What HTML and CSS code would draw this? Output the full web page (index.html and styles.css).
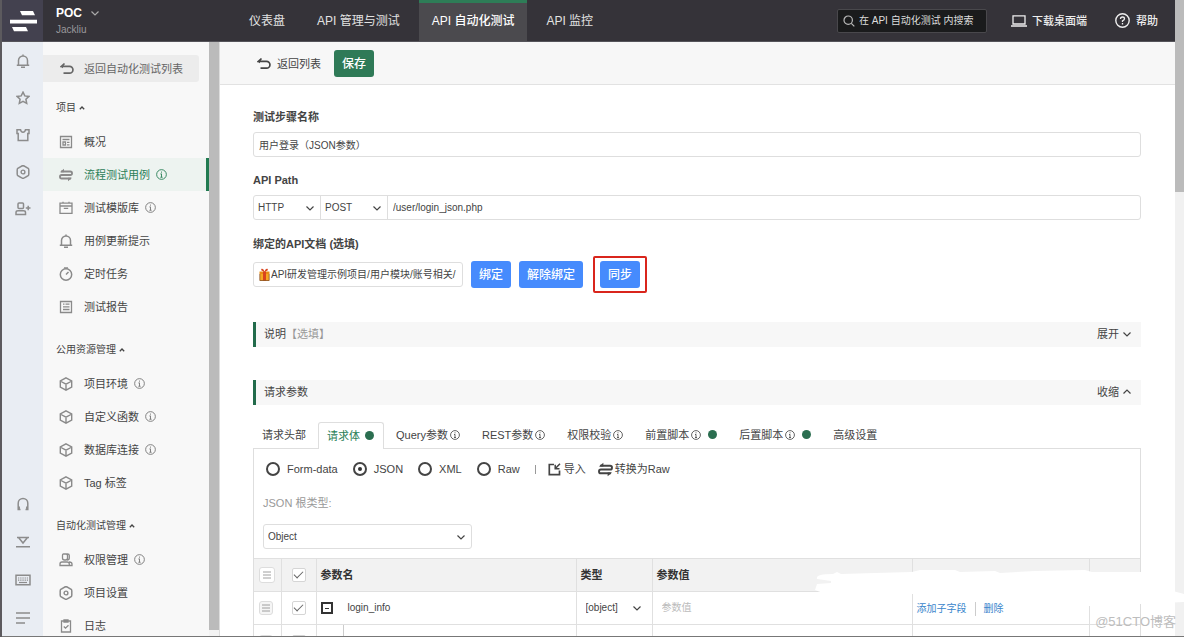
FILE: index.html
```html
<!DOCTYPE html>
<html lang="zh-CN">
<head>
<meta charset="utf-8">
<title>API 自动化测试</title>
<link rel="stylesheet" href="styles.css">
</head>
<body>
<svg class="sprite" aria-hidden="true">
  <symbol id="info" viewBox="0 0 12 12"><circle cx="6" cy="6" r="5.3" fill="none" stroke="currentColor"/><path d="M6 5.2V9M4.8 5.4H6M4.8 9H7.2M6 2.8V4" fill="none" stroke="currentColor"/></symbol>
  <symbol id="down" viewBox="0 0 10 10"><path d="M1.5 3.5 5 7 8.500 3.500" fill="none" stroke="currentColor" stroke-width="1.2"/></symbol>
  <symbol id="up" viewBox="0 0 10 10"><path d="M1.500 6.500 5 3 8.500 6.500" fill="none" stroke="currentColor" stroke-width="1.200"/></symbol>
  <symbol id="caret" viewBox="0 0 6 6"><path d="M.8 4.300 3 2 5.200 4.300" fill="none" stroke="currentColor" stroke-width="1.300"/></symbol>
  <symbol id="back" viewBox="0 0 14 14"><path d="M4.500 1.500 1.500 4.300H9.500a3.300 3.300 0 0 1 0 6.900H3.500M1.500 4.300 3 5.500" fill="none" stroke="currentColor" stroke-width="1.700"/></symbol>
  <symbol id="bell" viewBox="0 0 14 14"><path d="M2.500 11V6.500a4.500 4.500 0 0 1 9 0V11M.8 11.200H13.200M5 13.200H9M7 .5V2" fill="none" stroke="currentColor" stroke-width="1.500"/></symbol>
  <symbol id="star" viewBox="0 0 14 14"><path d="m7 1.200 1.800 3.700 4.100.5-3 2.800.8 4.200L7 10.300l-3.700 2.100.8-4.200-3-2.800 4.100-.5Z" fill="none" stroke="currentColor" stroke-width="1.500"/></symbol>
  <symbol id="shirt" viewBox="0 0 14 14"><path d="M1 1.700H4.500C5 5 9 5 9.500 1.700H13V5.500H11.800V12.500H2.200V5.500H1Z" fill="none" stroke="currentColor" stroke-width="1.500"/></symbol>
  <symbol id="gear" viewBox="0 0 14 14"><path d="M5.200 1.500Q7-.2 8.800 1.500L11.500 3Q13 3.200 12.800 5.500V8.500Q13 10.800 11.500 11L8.800 12.500Q7 14.200 5.200 12.500L2.500 11Q1 10.800 1.200 8.500V5.500Q1 3.200 2.500 3Z" fill="none" stroke="currentColor" stroke-width="1.500"/><circle cx="7" cy="7" r="1.900" fill="none" stroke="currentColor" stroke-width="1.400"/></symbol>
  <symbol id="adduser" viewBox="0 0 16 14"><path d="M4 1H7.500Q8.500 1 8.500 2V5.500Q8.500 6.500 7.500 6.500H4Q3 6.500 3 5.500V2Q3 1 4 1ZM1 12.500V10.500Q1 8.800 3 8.800H8.500Q10.500 8.800 10.500 10.500V12.500ZM10.800 6H15.500M13.200 3.700V8.300" fill="none" stroke="currentColor" stroke-width="1.500"/></symbol>
  <symbol id="headset" viewBox="0 0 14 14"><path d="M4.500 12.500H2.200V6.200a4.800 4.800 0 0 1 9.600 0V12.500H9.500M3.200 9.500V12.500M10.800 9.500V12.500" fill="none" stroke="currentColor" stroke-width="1.500"/></symbol>
  <symbol id="download" viewBox="0 0 14 14"><path d="M1 2.500H13M2.500 2.500 7 8 11.500 2.500M0 11.700H14" fill="none" stroke="currentColor" stroke-width="1.500"/></symbol>
  <symbol id="keyboard" viewBox="0 0 16 14"><path d="M1 2.200H15V11.800H1Z" fill="none" stroke="currentColor" stroke-width="1.500"/><path d="M3 5H13M3 7.200H13" fill="none" stroke="currentColor" stroke-width="1.200" stroke-dasharray="1.300 .9"/><path d="M4 9.500H12" stroke="currentColor" stroke-width="1.200"/></symbol>
  <symbol id="lines" viewBox="0 0 14 14"><path d="M0 2H14M0 7H14M0 12H9" fill="none" stroke="currentColor" stroke-width="1.500"/></symbol>
  <symbol id="overview" viewBox="0 0 14 14"><path d="M1.500 1.500H12.500V12.500H1.500ZM3.500 4.500H10.500M4 7H6.500V10H4ZM8 7.300H10.500M8 9.800H10.500" fill="none" stroke="currentColor" stroke-width="1.300"/></symbol>
  <symbol id="flow" viewBox="0 0 14 14"><path d="M2 3.500H11.300a1.700 1.700 0 0 1 0 3.500H2.700a1.700 1.700 0 0 0 0 3.500H12" fill="none" stroke="currentColor" stroke-width="1.800"/><path d="M.8 4.200 5 .8V4.200ZM13.200 9.800 9 13.200V9.800Z" fill="currentColor"/></symbol>
  <symbol id="box" viewBox="0 0 14 14"><path d="M1 2.200H13V12.300H1ZM1 5H13M4.800 7.300H9.200M4 .8V2.500M10 .8V2.500" fill="none" stroke="currentColor" stroke-width="1.300"/></symbol>
  <symbol id="timer" viewBox="0 0 14 14"><circle cx="7" cy="7.500" r="5.700" fill="none" stroke="currentColor" stroke-width="1.500"/><path d="M7 7.500 9.500 5M5 1H9" fill="none" stroke="currentColor" stroke-width="1.500"/></symbol>
  <symbol id="report" viewBox="0 0 14 14"><path d="M1.500 1.500H12.500V12.500H1.500ZM4 4.200H5.500M6.500 4.200H10.500M4 6.800H10.500M4 9.500H10.500" fill="none" stroke="currentColor" stroke-width="1.300"/></symbol>
  <symbol id="cube" viewBox="0 0 14 14"><path d="M7 .8 12.700 4V10L7 13.200 1.300 10V4ZM2 4.500 7 7.200 12 4.500M7 7.200V13" fill="none" stroke="currentColor" stroke-width="1.400"/></symbol>
  <symbol id="users" viewBox="0 0 14 14"><path d="M4.500 1H7Q8.500 1 8.500 2.500V5Q8.500 7 6.500 7H5.500Q3.500 7 3.500 5V2.500Q3.500 1 4.500 1ZM7.500 1H8.500Q10.300 1 10.300 2.500V5Q10.300 7 8 7M1 12.500V11Q1 9 3 9H8Q10.300 9 10.300 11V12.500ZM10 9Q13 9 13 11V12.500H10.500" fill="none" stroke="currentColor" stroke-width="1.300"/></symbol>
  <symbol id="log" viewBox="0 0 14 14"><path d="M2.500 2H11.500V13H2.500ZM5 .8H9V3H5ZM4.800 7.500 6.500 9.200 9.500 6.200" fill="none" stroke="currentColor" stroke-width="1.300"/></symbol>
</svg>

<div class="app">
  <header class="topbar">
    <a class="logo" href="#" aria-label="首页"><svg width="28" height="24" viewBox="0 0 28 24"><path d="M11 2H24L26 6.300H13ZM1 10.800H28V14.500H1ZM3 18H17L19 22.300H5Z" fill="#fff"/></svg></a>
    <div class="account">
      <button class="workspace" type="button">POC <svg width="10" height="10"><use href="#down"/></svg></button>
      <span class="user">Jackliu</span>
    </div>
    <nav class="nav">
      <a href="#">仪表盘</a>
      <a href="#">API 管理与测试</a>
      <a class="active" href="#">API 自动化测试</a>
      <a href="#">API 监控</a>
    </nav>
    <div class="tools">
      <label class="search"><svg width="12" height="12" viewBox="0 0 12 12"><circle cx="5.200" cy="5.200" r="4.200" fill="none" stroke="currentColor" stroke-width="1.200"/><path d="m8.300 8.300 3 3" stroke="currentColor" stroke-width="1.200"/></svg><input type="text" placeholder="在 API 自动化测试 内搜索" aria-label="搜索"></label>
      <a class="desktop" href="#"><svg width="16" height="12" viewBox="0 0 16 12"><path d="M2 .8H14V9H2ZM0 11H16" fill="none" stroke="currentColor" stroke-width="1.300"/></svg>下载桌面端</a>
      <a class="help" href="#"><svg width="15" height="15" viewBox="0 0 15 15"><circle cx="7.500" cy="7.500" r="6.700" fill="none" stroke="currentColor" stroke-width="1.400"/><path d="M5.500 6Q5.500 4 7.500 4T9.500 5.800Q9.500 7 7.500 7.800V9M7.500 10V11.500" fill="none" stroke="currentColor" stroke-width="1.300"/></svg>帮助</a>
    </div>
  </header>

  <div class="body">
    <div class="rail">
      <div class="rail-group">
        <button type="button" aria-label="通知"><svg width="14" height="14"><use href="#bell"/></svg></button>
        <button type="button" aria-label="收藏"><svg width="14" height="14"><use href="#star"/></svg></button>
        <button type="button" aria-label="主题"><svg width="14" height="14"><use href="#shirt"/></svg></button>
        <button type="button" aria-label="设置"><svg width="14" height="14"><use href="#gear"/></svg></button>
        <button type="button" aria-label="邀请成员"><svg width="16" height="14"><use href="#adduser"/></svg></button>
      </div>
      <div class="rail-group lower">
        <button type="button" aria-label="客服"><svg width="14" height="14"><use href="#headset"/></svg></button>
        <button type="button" aria-label="下载"><svg width="14" height="14"><use href="#download"/></svg></button>
        <button type="button" aria-label="快捷键"><svg width="16" height="14"><use href="#keyboard"/></svg></button>
        <button type="button" aria-label="菜单"><svg width="14" height="14"><use href="#lines"/></svg></button>
      </div>
    </div>

    <aside class="sidebar">
      <a class="side-back" href="#"><svg width="14" height="14"><use href="#back"/></svg>返回自动化测试列表</a>
      <section class="side-section">
        <h2>项目<svg width="6" height="6"><use href="#caret"/></svg></h2>
        <a href="#"><svg width="14" height="14"><use href="#overview"/></svg>概况</a>
        <a class="active" href="#"><svg width="14" height="14"><use href="#flow"/></svg>流程测试用例<svg class="info" width="11" height="11"><use href="#info"/></svg></a>
        <a href="#"><svg width="14" height="14"><use href="#box"/></svg>测试模版库<svg class="info" width="11" height="11"><use href="#info"/></svg></a>
        <a href="#"><svg width="14" height="14"><use href="#bell"/></svg>用例更新提示</a>
        <a href="#"><svg width="14" height="14"><use href="#timer"/></svg>定时任务</a>
        <a href="#"><svg width="14" height="14"><use href="#report"/></svg>测试报告</a>
      </section>
      <section class="side-section">
        <h2>公用资源管理<svg width="6" height="6"><use href="#caret"/></svg></h2>
        <a href="#"><svg width="14" height="14"><use href="#cube"/></svg>项目环境<svg class="info" width="11" height="11"><use href="#info"/></svg></a>
        <a href="#"><svg width="14" height="14"><use href="#cube"/></svg>自定义函数<svg class="info" width="11" height="11"><use href="#info"/></svg></a>
        <a href="#"><svg width="14" height="14"><use href="#cube"/></svg>数据库连接<svg class="info" width="11" height="11"><use href="#info"/></svg></a>
        <a href="#"><svg width="14" height="14"><use href="#cube"/></svg>Tag 标签</a>
      </section>
      <section class="side-section">
        <h2>自动化测试管理<svg width="6" height="6"><use href="#caret"/></svg></h2>
        <a href="#"><svg width="14" height="14"><use href="#users"/></svg>权限管理<svg class="info" width="11" height="11"><use href="#info"/></svg></a>
        <a href="#"><svg width="14" height="14"><use href="#gear"/></svg>项目设置</a>
        <a href="#"><svg width="14" height="14"><use href="#log"/></svg>日志</a>
      </section>
    </aside>
    <div class="side-scroll"><div class="side-thumb"></div></div>

    <main class="main">
      <div class="toolbar">
        <a class="return" href="#"><svg width="14" height="14"><use href="#back"/></svg>返回列表</a>
        <button class="btn save" type="button">保存</button>
      </div>
      <form class="content">
        <label class="label" for="name">测试步骤名称</label>
        <input class="field" id="name" type="text" value="用户登录（JSON参数）">

        <label class="label" for="path">API Path</label>
        <div class="path field">
          <span class="select"><select aria-label="协议"><option>HTTP</option></select><svg width="10" height="10"><use href="#down"/></svg></span>
          <span class="select"><select aria-label="请求方式"><option>POST</option></select><svg width="10" height="10"><use href="#down"/></svg></span>
          <input id="path" type="text" value="/user/login_json.php">
        </div>

        <label class="label" for="doc">绑定的API文档 (选填)</label>
        <div class="bind">
          <div class="doc field">
            <svg width="11" height="13" viewBox="0 0 11 13"><path d="M1 4H10V12.500H1Z" fill="#f5a623"/><path d="M.5 3.500H10.500V6H.5Z" fill="#e88c14"/><path d="M4 3.500H7V12.500H4ZM5.500 3.500Q1 3 2.500.8 4.500 0 5.500 3.500 6.500 0 8.500.8 10 3 5.500 3.500Z" fill="#d9431e"/><path d="M.8 6V12.500H10.200V6" fill="none" stroke="#8a4b14" stroke-width=".8"/></svg>
            <input id="doc" type="text" value="API研发管理示例项目/用户模块/账号相关/">
          </div>
          <button class="btn blue" type="button">绑定</button>
          <button class="btn blue" type="button">解除绑定</button>
          <span class="marked"><button class="btn blue" type="button">同步</button></span>
        </div>

        <div class="bar first"><h3>说明<span>【选填】</span></h3><button type="button">展开<svg width="10" height="10"><use href="#down"/></svg></button></div>
        <div class="bar"><h3>请求参数</h3><button type="button">收缩<svg width="10" height="10"><use href="#up"/></svg></button></div>

        <div class="tabs">
          <button type="button">请求头部</button>
          <button class="active" type="button">请求体<i class="dot"></i></button>
          <button type="button">Query参数<svg width="10" height="10"><use href="#info"/></svg></button>
          <button type="button">REST参数<svg width="10" height="10"><use href="#info"/></svg></button>
          <button type="button">权限校验<svg width="10" height="10"><use href="#info"/></svg></button>
          <button type="button">前置脚本<svg width="10" height="10"><use href="#info"/></svg><i class="dot"></i></button>
          <button type="button">后置脚本<svg width="10" height="10"><use href="#info"/></svg><i class="dot"></i></button>
          <button type="button">高级设置</button>
        </div>

        <div class="panel">
          <div class="formats">
            <label><input type="radio" name="format">Form-data</label>
            <label><input type="radio" name="format" checked>JSON</label>
            <label><input type="radio" name="format">XML</label>
            <label><input type="radio" name="format">Raw</label>
            <span class="sep"></span>
            <button type="button"><svg width="13" height="13" viewBox="0 0 13 13"><path d="M6 1.500H1.300V11.700H11.500V7.500" fill="none" stroke="currentColor" stroke-width="1.700"/><path d="M12 .8 7.800 5M7.200 1.800V5.700H11.500" fill="none" stroke="currentColor" stroke-width="1.500"/></svg>导入</button>
            <button class="convert" type="button"><svg width="15" height="15"><use href="#flow"/></svg>转换为Raw</button>
          </div>
          <label class="root-label" for="root">JSON 根类型:</label>
          <span class="select field root"><select id="root"><option>Object</option></select><svg width="10" height="10"><use href="#down"/></svg></span>

          <table>
            <colgroup><col class="c-handle"><col class="c-check"><col class="c-name"><col class="c-type"><col class="c-value"><col class="c-actions"><col class="c-end"></colgroup>
            <thead>
              <tr>
                <th><button class="handle" type="button" aria-label="排序"><svg width="8" height="8" viewBox="0 0 8 8"><path d="M0 1H8M0 4H8M0 7H8" stroke="currentColor" stroke-width=".8"/></svg></button></th>
                <th class="mid"><input type="checkbox" checked aria-label="全选"></th>
                <th>参数名</th><th>类型</th><th>参数值</th><th></th><th></th>
              </tr>
            </thead>
            <tbody>
              <tr>
                <td><button class="handle soft" type="button" aria-label="排序"><svg width="8" height="8" viewBox="0 0 8 8"><path d="M0 1H8M0 4H8M0 7H8" stroke="currentColor" stroke-width=".8"/></svg></button></td>
                <td class="mid"><input type="checkbox" checked aria-label="选择 login_info"></td>
                <td><div class="name"><button class="collapse" type="button" aria-label="收起"></button><span>login_info</span></div></td>
                <td class="type"><span class="select"><select aria-label="类型"><option>[object]</option></select><svg width="10" height="10"><use href="#down"/></svg></span></td>
                <td><input class="value" type="text" placeholder="参数值" aria-label="参数值"></td>
                <td><div class="actions"><a href="#">添加子字段</a><a href="#">删除</a></div></td>
                <td></td>
              </tr>
              <tr>
                <td><button class="handle soft" type="button" aria-label="排序"><svg width="8" height="8" viewBox="0 0 8 8"><path d="M0 1H8M0 4H8M0 7H8" stroke="currentColor" stroke-width=".8"/></svg></button></td>
                <td class="mid"><input type="checkbox" aria-label="选择子字段"></td>
                <td><div class="branch"></div></td>
                <td></td><td></td><td></td><td></td>
              </tr>
            </tbody>
          </table>
        </div>
      </form>
    </main>
  </div>
</div>
<div class="page-scroll"><div class="page-thumb"></div></div>
<svg class="erased" width="369" height="40" viewBox="0 0 369 40"><path d="M2 10Q0 5 18 5L22 3 26 5 60 4 97 3 105 1 140 1 145 3 180 2 185 4 220 2 270 1 277 3 330 3 346 5 347 21 358 22 369 25V33L326 35 274 37 200 37 190 30 97 25 8 24 0 21 2 15 16 14V12Z" fill="#fff"/></svg>
<span class="watermark">@51CTO博客</span>
</body>
</html>
```
FILE: styles.css
```css
* { box-sizing: border-box; }

body {
  position: relative;
  display: flex;
  height: 100vh;
  margin: 0;
  overflow: hidden;
  border-left: 2px solid #5c5a5e;
  background: #fff;
  color: #444;
  font: 11px/14px "Liberation Sans", "Noto Sans CJK SC", sans-serif;
}

body::after {
  content: "";
  position: absolute;
  inset: auto 0 0 -2px;
  height: 1px;
  background: #777;
}

a { color: inherit; text-decoration: none; }
button, input, select { margin: 0; padding: 0; border: 0; background: none; color: inherit; font: inherit; }
input, select { min-width: 0; outline: 0; }
svg { flex: none; }
h2, h3 { margin: 0; font: inherit; }
.sprite { position: absolute; width: 0; height: 0; }

.app { display: flex; flex: 1; flex-direction: column; min-width: 0; }

/* top bar */
.topbar { display: flex; flex: none; height: 42px; border-bottom: 1px solid #55545a; background: #353339; color: #e2e2e2; }
.logo { display: grid; place-items: center; width: 41px; background: #43414f; }
.account { display: flex; flex-direction: column; justify-content: center; gap: 3px; width: 176px; padding: 2px 0 0 13px; font-size: 10px; }
.workspace { display: flex; align-items: center; gap: 8px; color: #fff; font-size: 12px; font-weight: bold; }
.workspace svg { color: #aaa; }
.user { color: #99989c; }
.nav { display: flex; gap: 6px; margin-left: 17px; font-size: 12px; }
.nav a { display: flex; align-items: center; padding: 0 13px; border-top: 3px solid transparent; border-bottom: 3px solid transparent; white-space: nowrap; }
.nav .active { border-top-color: #2e7d57; border-bottom-color: #4b4a4e; background: #4b4a4e; color: #fff; font-weight: 500; }
.tools { display: flex; align-items: center; margin-left: auto; padding-right: 17px; white-space: nowrap; }
.search { display: flex; align-items: center; gap: 4px; width: 150px; height: 24px; padding: 0 5px; border: 1px solid #49484c; border-radius: 2px; background: #1a1b1c; color: #bbb; font-size: 10px; }
.search input { flex: 1; }
.search input::placeholder { color: #ddd; opacity: 1; }
.desktop, .help { display: flex; align-items: center; color: #eee; font-weight: 500; }
.desktop { gap: 5px; margin-left: 24px; }
.help { gap: 6px; margin-left: 28px; }

.body { display: flex; flex: 1; min-height: 0; }

/* icon rail */
.rail { display: flex; flex: none; flex-direction: column; justify-content: space-between; width: 41px; padding-bottom: 1px; background: #e9edf3; color: #8c8c8c; }
.rail-group { display: flex; flex-direction: column; }
.lower { gap: 1px; }
.rail button { display: grid; place-items: center; height: 37px; }

/* sidebar */
.sidebar { flex: none; width: 166px; padding-top: 13px; overflow: hidden; background: #f8f8f8; }
.side-back { display: flex; align-items: center; gap: 10px; height: 27px; margin: 0 10px 10px 0; padding-left: 17px; border-radius: 0 3px 3px 0; background: #ececec; color: #666; }
.side-section { margin-bottom: 11px; }
.side-section h2 { display: flex; align-items: center; gap: 3px; height: 31px; margin-bottom: 2px; padding-left: 13px; font-size: 10px; }
.side-section a { display: flex; align-items: center; height: 33px; padding-left: 16px; border-right: 3px solid transparent; }
.side-section a > svg:first-child { margin-right: 11px; color: #8a8a8a; }
.side-section .active { border-right-color: #207a50; background: #edf3f0; color: #2b8058; }
.info { margin-left: 6px; color: #777; }
.active .info { color: #2b8058; }
.side-scroll { flex: none; width: 11px; padding-bottom: 7px; border-right: 1px solid #ddd; background: #f3f3f3; }
.side-thumb { height: 100%; background: #bbb; }

/* main column */
.main { flex: 1; min-width: 0; overflow: hidden; }
.toolbar { display: flex; align-items: center; gap: 13px; height: 43px; padding: 1px 0 0 37px; border-bottom: 1px solid #e2e2e2; background: #f7f7f7; }
.return { display: flex; align-items: center; gap: 6px; }
.btn { height: 27px; padding: 0 8px; border-radius: 3px; color: #fff; font-size: 12px; font-weight: 500; white-space: nowrap; }
.save { background: #2f7a57; }
.blue { background: #468bfd; }

.content { display: flex; flex-direction: column; padding: 25px 34px 0 33px; }
.label { margin-bottom: 8px; font-weight: bold; }
.field { height: 25px; border: 1px solid #dedede; border-radius: 3px; font-size: 10px; }
input.field { padding: 0 5px; }
#name { margin-bottom: 16px; }
.select { display: grid; align-items: center; }
.select select { grid-area: 1 / 1; width: 100%; height: 100%; padding-left: 4px; appearance: none; }
.select svg { grid-area: 1 / 1; justify-self: end; margin-right: 5px; pointer-events: none; }
.path { display: flex; margin-bottom: 17px; }
.path .select { width: 67px; border-right: 1px solid #dedede; }
.path input { flex: 1; padding: 0 5px; }
.label[for="doc"] { margin-bottom: 5px; }
.bind { display: flex; align-items: center; gap: 8px; margin-bottom: 29px; }
.doc { display: flex; align-items: center; gap: 1px; width: 210px; padding: 0 5px; }
.doc input { flex: 1; }
.marked { display: flex; margin-left: 2px; padding: 3px 5px; border: 2px solid #d9251c; border-radius: 2px; }

.bar { display: flex; align-items: center; justify-content: space-between; height: 25px; margin-bottom: 17px; padding: 0 9px 2px 8px; border-left: 3px solid #226b4b; background: #f7f7f7; }
.bar.first { margin-bottom: 33px; }
.bar h3 span { color: #999; }
.bar button { display: flex; align-items: center; gap: 3px; }

.tabs { display: flex; height: 27px; margin-bottom: -1px; }
.tabs button { display: flex; align-items: center; gap: 2px; padding: 0 11px 2px; white-space: nowrap; }
.tabs button:first-child { padding-left: 9px; }
.tabs .active { position: relative; gap: 5px; margin: 0 1px; padding: 0 9px 1px 8px; border: 1px solid #dedede; border-bottom: 0; border-radius: 3px 3px 0 0; background: #fff; color: #2b8058; }
.dot { width: 9px; height: 9px; border-radius: 50%; background: #2b6e50; }
.tabs svg + .dot { margin-left: 5px; }

.panel { display: flex; flex-direction: column; padding-top: 11px; border: 1px solid #dedede; border-bottom: 0; }
.formats { display: flex; align-items: center; height: 18px; padding-left: 12px; }
.formats label { display: flex; align-items: center; gap: 7px; margin-right: 15px; }
.formats button { display: flex; align-items: center; gap: 3px; margin-left: 12px; }
.formats .convert { gap: 2px; }
input[type="radio"] { display: grid; place-items: center; width: 14px; height: 14px; border: 2px solid #444; border-radius: 50%; appearance: none; }
input[type="radio"]:checked::after { content: ""; width: 4px; height: 4px; border-radius: 50%; background: #333; }
.sep { width: 1px; height: 9px; background: #999; }
.root-label { margin: 18px 0 14px 9px; color: #999; font-size: 11px; }
.root { width: 209px; margin: 0 0 9px 9px; }

/* parameter table */
table { width: 100%; table-layout: fixed; border-collapse: collapse; }
.c-handle { width: 27px; }
.c-check { width: 35px; }
.c-type { width: 76px; }
.c-actions { width: 177px; }
.c-end { width: 51px; }
tr { height: 33px; }
th, td { padding: 0 4px; border: 1px solid #e0e0e0; text-align: left; }
th { background: #f2f2f2; color: #333; font-weight: bold; }
td { font-size: 10px; }
th:first-child, td:first-child { padding: 0 5px; border-left: 0; }
th:last-child, td:last-child { border-right: 0; }
.mid { padding: 0 10px; }
.handle { display: grid; place-items: center; width: 16px; height: 16px; border: 1px solid #ddd; border-radius: 3px; background: #fff; color: #888; }
.soft { width: 14px; height: 14px; background: #f5f5f5; }
input[type="checkbox"] { display: grid; place-items: center; width: 14px; height: 14px; border: 1px solid #d5d5d5; border-radius: 2px; background: #fff; appearance: none; }
input[type="checkbox"]:checked::after { content: ""; width: 8px; height: 4px; margin-bottom: 3px; border: solid #666; border-width: 0 0 1px 1px; transform: rotate(-45deg); }
.name { display: flex; align-items: center; gap: 15px; }
.collapse { display: grid; place-items: center; width: 12px; height: 12px; border: 2px solid #333; }
.collapse::after { content: ""; width: 4px; height: 1px; background: #333; }
.type .select select { padding-left: 5px; }
.type .select svg { margin-right: 6px; }
.value { width: 100%; padding-left: 5px; }
.value::placeholder { color: #bbb; opacity: 1; }
.actions { display: flex; padding-top: 2px; color: #3a86cc; }
.actions a + a { margin-left: 8px; padding-left: 8px; border-left: 1px solid #ccc; }
.branch { height: 33px; margin-left: 22px; border-left: 1px solid #ccc; }

/* page scrollbar and overlays */
.page-scroll { flex: none; width: 9px; background: #f1f1f1; }
.page-thumb { height: 192px; background: #bbb; }
.erased { position: absolute; top: 569px; right: 0; }
.watermark { position: absolute; right: 8px; bottom: 6px; color: #bdbdbd; font-size: 13px; line-height: 18px; }
```
